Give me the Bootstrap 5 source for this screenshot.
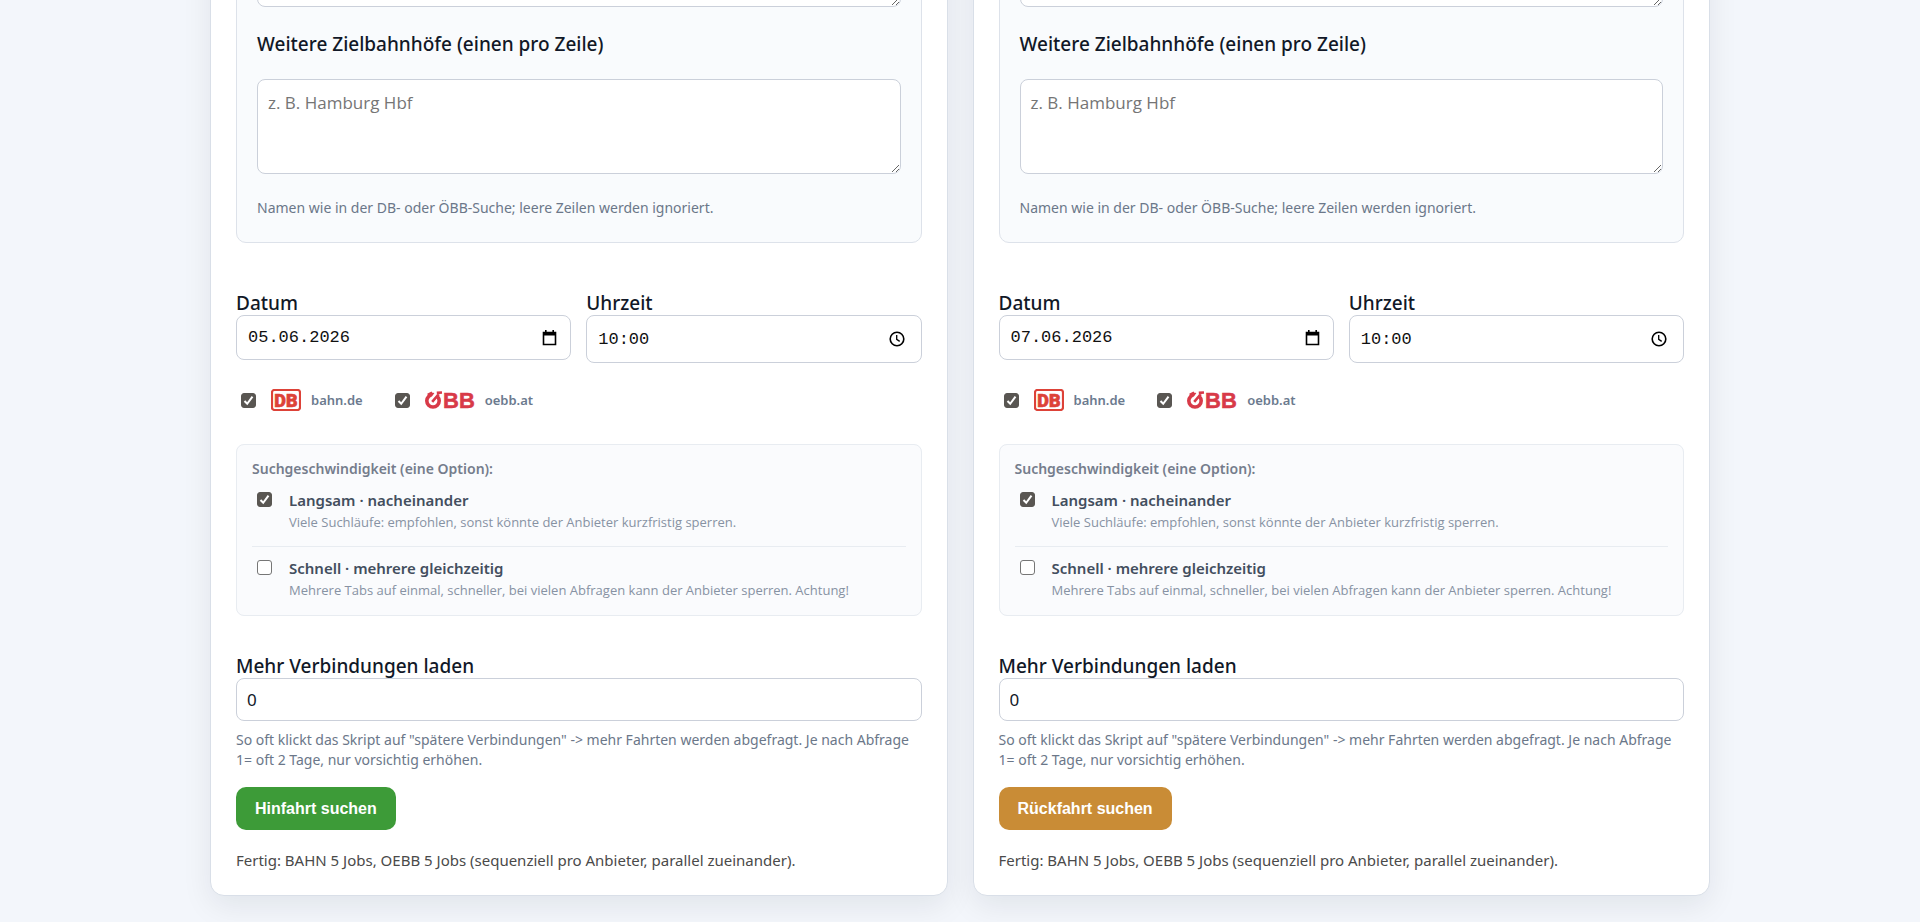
<!DOCTYPE html>
<html lang="de">
<head>
<meta charset="utf-8">
<meta name="viewport" content="width=device-width, initial-scale=1">
<title>Zugsuche</title>
<link href="https://cdn.jsdelivr.net/npm/bootstrap@5.3.0/dist/css/bootstrap.min.css" rel="stylesheet">
<style>
body{background:#f3f6fb;font-family:"Noto Sans","Open Sans",sans-serif;color:#111827;overflow-x:hidden}
.page{max-width:1500px;margin:-120px auto 27px;gap:25px}
.trip{flex:1 1 0;min-width:0;background:#fff;border:1px solid #d9dfe8;border-radius:14px;padding:24px 25px 23px;box-shadow:0 10px 30px rgba(15,23,42,.08)}
.stations{background:#f9fbfd;border:1px solid #dde2ea;border-radius:10px;padding:6px 20px 24px}
.head{font-size:19px;font-weight:500;line-height:24px;display:block}
.stations .head{line-height:30px;margin:22px 0 20px}
.field{display:block;width:100%;background:#fff;border:1px solid #cbd0da;border-radius:8px;color:#111827;padding:0 10px;font-size:17px}
textarea.field{height:95px;padding:9px 10px;font-family:"Open Sans",sans-serif;line-height:27px;resize:vertical}
textarea.field::placeholder{color:#757575}
.hint{font-size:14px;line-height:20px;color:#6b7789;margin:24px 0 0}
.when{margin-top:48px;gap:15px;align-items:flex-start}
.picker{display:flex;align-items:center;padding:0 12px 0 11px;height:45px}
.picker.clock{height:48px}
.picker input{flex:1;min-width:0;border:0;padding:0;background:none;outline:0;color:#111;font:17px "Liberation Mono",monospace}
.picker button{border:0;background:none;padding:0;display:flex;color:#000}
.picker.clock button{margin-right:4px}
.picker.cal button{margin-right:1px}
.providers{height:24px;margin-top:25px;gap:27px}
.providers label{display:flex;align-items:center}
.tick{appearance:none;flex:none;width:15px;height:15px;border:1px solid #767676;border-radius:3px;background:#fff;margin:0 0 0 5px}
.tick:checked{border-color:#595652;background:#595652 url("data:image/svg+xml,%3Csvg xmlns='http://www.w3.org/2000/svg' viewBox='0 0 13 13'%3E%3Cpath d='M2.5 7l2.7 2.8 5.3-7.2' fill='none' stroke='white' stroke-width='2'/%3E%3C/svg%3E") center/13px}
.providers svg{margin:0 10px 0 15px}
.providers span{font-size:13px;font-weight:600;color:#6b7a8e;line-height:20px}
.speed{border:1px solid #e8ecf1;background:#fafbfd;border-radius:8px;padding:14px 15px 13px;margin:32px 0 38px}
.speed legend{font-size:14px;font-weight:600;line-height:20px;color:#757d8c;margin:0}
.choice{display:flex;clear:both;padding:10px 0 12px;border-bottom:1px solid #e8ecf1}
.choice:last-child{padding-bottom:0;border:0}
.choice .tick{margin:3px 17px 0 5px}
.choice b{display:block;font-size:15px;font-weight:600;line-height:22px;color:#434e5e}
.choice small{display:block;font-family:"Open Sans",sans-serif;font-size:13px;line-height:23px;color:#8792a3}
.count{height:43px}
.more{margin-top:9px}
.go{border:0;border-radius:10px;height:43px;padding:0 19px;color:#fff;font:bold 16px "Liberation Sans",Arial,sans-serif;margin-top:17px}
.out{background:#3d9b38}.back{background:#c98c36}
.state{font-size:15px;line-height:24px;margin:18px 0 0;color:#4a4a4a}
</style>
</head>
<body>
<main class="page d-flex">
<form class="trip" onsubmit="return false">
  <div class="stations">
    <textarea class="field" aria-label="Weitere Startbahnhöfe"></textarea>
    <label class="head" for="z1">Weitere Zielbahnhöfe (einen pro Zeile)</label>
    <textarea class="field" id="z1" placeholder="z. B. Hamburg Hbf"></textarea>
    <p class="hint">Namen wie in der DB- oder ÖBB-Suche; leere Zeilen werden ignoriert.</p>
  </div>
  <div class="when d-flex">
    <div class="flex-fill w-50"><label class="head" for="d1">Datum</label>
      <div class="field picker cal"><input id="d1" type="text" value="05.06.2026"><button type="button" aria-label="Kalender"><svg width="15" height="16" viewBox="0 0 15 16"><path d="M1.500 2.500h12v12h-12z" fill="none" stroke="currentColor" stroke-width="1.600"/><path d="M1 2h13v3.500H1zM3 0h1.600v3H3zM10.400 0H12v3h-1.600z" fill="currentColor"/></svg></button></div></div>
    <div class="flex-fill w-50"><label class="head" for="u1">Uhrzeit</label>
      <div class="field picker clock"><input id="u1" type="text" value="10:00"><button type="button" aria-label="Uhr"><svg width="16" height="16" viewBox="0 0 16 16"><circle cx="8" cy="8" r="6.800" fill="none" stroke="currentColor" stroke-width="1.600"/><path d="M7.700 4v4.400l3 2" fill="none" stroke="currentColor" stroke-width="1.300"/></svg></button></div></div>
  </div>
  <div class="providers d-flex">
    <label><input class="tick" type="checkbox" checked><svg width="30" height="22" viewBox="0 0 30 22"><rect x="1" y="1" width="28" height="20" rx="2.5" fill="#fff" stroke="#dd4238" stroke-width="2.200"/><text x="15" y="17.500" text-anchor="middle" font-family="Roboto,sans-serif" font-weight="900" font-size="18" fill="#dd4238" stroke="#dd4238" stroke-width=".6">DB</text></svg><span>bahn.de</span></label>
    <label><input class="tick" type="checkbox" checked><svg width="50" height="18" viewBox="0 0 50 18" overflow="visible"><circle cx="8" cy="9.800" r="6.200" fill="none" stroke="#d83a48" stroke-width="3.600"/><path d="M7 9.500L12.500 1.500" stroke="#fff" stroke-width="4.600"/><path d="M7.200 10.800L13.800 3.200M11.800 1.900L17 1.500" fill="none" stroke="#d83a48" stroke-width="2.600"/><path d="M2.600 3.600L7 1.200" stroke="#d83a48" stroke-width="1.800"/><text x="18" y="16.500" font-family="Liberation Sans,Arial,sans-serif" font-weight="bold" font-size="22" fill="#d83a48" stroke="#d83a48" stroke-width=".5">BB</text></svg><span>oebb.at</span></label>
  </div>
  <fieldset class="speed">
    <legend class="float-start w-100">Suchgeschwindigkeit (eine Option):</legend>
    <label class="choice"><input class="tick" type="checkbox" checked><span><b>Langsam · nacheinander</b><small>Viele Suchläufe: empfohlen, sonst könnte der Anbieter kurzfristig sperren.</small></span></label>
    <label class="choice"><input class="tick" type="checkbox"><span><b>Schnell · mehrere gleichzeitig</b><small>Mehrere Tabs auf einmal, schneller, bei vielen Abfragen kann der Anbieter sperren. Achtung!</small></span></label>
  </fieldset>
  <label class="head" for="m1">Mehr Verbindungen laden</label>
  <input class="field count" id="m1" type="text" inputmode="numeric" value="0">
  <p class="hint more">So oft klickt das Skript auf "spätere Verbindungen" -&gt; mehr Fahrten werden abgefragt. Je nach Abfrage 1= oft 2 Tage, nur vorsichtig erhöhen.</p>
  <button class="go out" type="submit">Hinfahrt suchen</button>
  <p class="state">Fertig: BAHN 5 Jobs, OEBB 5 Jobs (sequenziell pro Anbieter, parallel zueinander).</p>
</form>
<form class="trip" onsubmit="return false">
  <div class="stations">
    <textarea class="field" aria-label="Weitere Startbahnhöfe"></textarea>
    <label class="head" for="z2">Weitere Zielbahnhöfe (einen pro Zeile)</label>
    <textarea class="field" id="z2" placeholder="z. B. Hamburg Hbf"></textarea>
    <p class="hint">Namen wie in der DB- oder ÖBB-Suche; leere Zeilen werden ignoriert.</p>
  </div>
  <div class="when d-flex">
    <div class="flex-fill w-50"><label class="head" for="d2">Datum</label>
      <div class="field picker cal"><input id="d2" type="text" value="07.06.2026"><button type="button" aria-label="Kalender"><svg width="15" height="16" viewBox="0 0 15 16"><path d="M1.500 2.500h12v12h-12z" fill="none" stroke="currentColor" stroke-width="1.600"/><path d="M1 2h13v3.500H1zM3 0h1.600v3H3zM10.400 0H12v3h-1.600z" fill="currentColor"/></svg></button></div></div>
    <div class="flex-fill w-50"><label class="head" for="u2">Uhrzeit</label>
      <div class="field picker clock"><input id="u2" type="text" value="10:00"><button type="button" aria-label="Uhr"><svg width="16" height="16" viewBox="0 0 16 16"><circle cx="8" cy="8" r="6.800" fill="none" stroke="currentColor" stroke-width="1.600"/><path d="M7.700 4v4.400l3 2" fill="none" stroke="currentColor" stroke-width="1.300"/></svg></button></div></div>
  </div>
  <div class="providers d-flex">
    <label><input class="tick" type="checkbox" checked><svg width="30" height="22" viewBox="0 0 30 22"><rect x="1" y="1" width="28" height="20" rx="2.5" fill="#fff" stroke="#dd4238" stroke-width="2.200"/><text x="15" y="17.500" text-anchor="middle" font-family="Roboto,sans-serif" font-weight="900" font-size="18" fill="#dd4238" stroke="#dd4238" stroke-width=".6">DB</text></svg><span>bahn.de</span></label>
    <label><input class="tick" type="checkbox" checked><svg width="50" height="18" viewBox="0 0 50 18" overflow="visible"><circle cx="8" cy="9.800" r="6.200" fill="none" stroke="#d83a48" stroke-width="3.600"/><path d="M7 9.500L12.500 1.500" stroke="#fff" stroke-width="4.600"/><path d="M7.200 10.800L13.800 3.200M11.800 1.900L17 1.500" fill="none" stroke="#d83a48" stroke-width="2.600"/><path d="M2.600 3.600L7 1.200" stroke="#d83a48" stroke-width="1.800"/><text x="18" y="16.500" font-family="Liberation Sans,Arial,sans-serif" font-weight="bold" font-size="22" fill="#d83a48" stroke="#d83a48" stroke-width=".5">BB</text></svg><span>oebb.at</span></label>
  </div>
  <fieldset class="speed">
    <legend class="float-start w-100">Suchgeschwindigkeit (eine Option):</legend>
    <label class="choice"><input class="tick" type="checkbox" checked><span><b>Langsam · nacheinander</b><small>Viele Suchläufe: empfohlen, sonst könnte der Anbieter kurzfristig sperren.</small></span></label>
    <label class="choice"><input class="tick" type="checkbox"><span><b>Schnell · mehrere gleichzeitig</b><small>Mehrere Tabs auf einmal, schneller, bei vielen Abfragen kann der Anbieter sperren. Achtung!</small></span></label>
  </fieldset>
  <label class="head" for="m2">Mehr Verbindungen laden</label>
  <input class="field count" id="m2" type="text" inputmode="numeric" value="0">
  <p class="hint more">So oft klickt das Skript auf "spätere Verbindungen" -&gt; mehr Fahrten werden abgefragt. Je nach Abfrage 1= oft 2 Tage, nur vorsichtig erhöhen.</p>
  <button class="go back" type="submit">Rückfahrt suchen</button>
  <p class="state">Fertig: BAHN 5 Jobs, OEBB 5 Jobs (sequenziell pro Anbieter, parallel zueinander).</p>
</form>
</main>
<script src="https://cdn.jsdelivr.net/npm/bootstrap@5.3.0/dist/js/bootstrap.bundle.min.js"></script>
</body>
</html>
